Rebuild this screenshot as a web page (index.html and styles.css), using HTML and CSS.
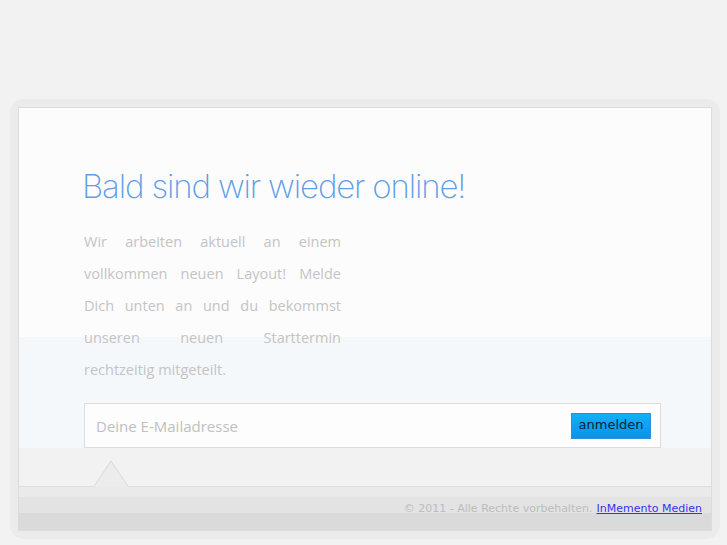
FILE: index.html
```html
<!DOCTYPE html>
<html lang="de">
<head>
<meta charset="utf-8">
<title>Bald sind wir wieder online!</title>
<link rel="stylesheet" href="styles.css">
</head>
<body>
<div class="frame">
  <div class="panel">
    <div class="content">
      <h1 class="title">Bald sind wir wieder online!</h1>
      <p class="intro">Wir arbeiten aktuell an einem vollkommen neuen Layout! Melde Dich unten an und du bekommst unseren neuen Starttermin rechtzeitig mitgeteilt.</p>
      <form class="signup">
        <input class="email" type="text" placeholder="Deine E-Mailadresse">
        <button class="submit" type="button">anmelden</button>
      </form>
    </div>
    <div class="shelf">
      <span class="notch"></span>
    </div>
    <div class="footer">
      <span class="copy">© 2011 - Alle Rechte vorbehalten.</span>
      <a class="link" href="#">InMemento Medien</a>
    </div>
  </div>
</div>
</body>
</html>
```

FILE: styles.css
```css
html, body {
  margin: 0;
  padding: 0;
  background: #f2f2f2;
}

body {
  padding-top: 99px;
  font-family: "Open Sans", "DejaVu Sans", sans-serif;
}

.frame {
  margin-left: 10px;
  width: 694px;
  padding: 8px;
  background: #ebebeb;
  border-radius: 14px;
}

.panel {
  border: 1px solid #dcdcdc;
  background: #fcfcfc;
}

.content {
  height: 340px;
  padding: 0 50px 0 65px;
  box-sizing: border-box;
  background: linear-gradient(to bottom, #fcfcfc 0, #fcfcfc 229px, #f5f8fb 229px, #f5f8fb 100%);
  display: flex;
  flex-direction: column;
}

.title {
  margin: 56px 0 0 -2px;
  font-family: "Inter", sans-serif;
  font-weight: 200;
  font-size: 33px;
  line-height: 44px;
  letter-spacing: -1.15px;
  color: #5f9ee8;
}

.intro {
  margin: 18px 0 0 0;
  width: 257px;
  font-size: 14.5px;
  line-height: 32px;
  font-weight: 400;
  color: #c4c4c4;
  text-align: justify;
}

.signup {
  margin: 17px 0 0 0;
  height: 46px;
  box-sizing: border-box;
  border: 1px solid #dcdcdc;
  background: #fdfdfd;
  display: flex;
  align-items: center;
  padding: 0 8px 0 11px;
}

.email {
  flex: 1;
  border: 0;
  outline: 0;
  background: transparent;
  font-family: "Open Sans", sans-serif;
  font-size: 15px;
  color: #999;
  padding: 0;
}

.email::placeholder {
  color: #c0c0c0;
}

.submit {
  width: 80px;
  height: 26px;
  margin-right: 1px;
  border: 1px solid #2e8fd6;
  background: linear-gradient(to bottom, #12b0f8, #0a92ea);
  font-family: "DejaVu Sans", sans-serif;
  font-size: 13px;
  color: #0c2336;
  padding: 0 0 2px 0;
}

.shelf {
  height: 38px;
  background: #f2f2f2;
  border-bottom: 1px solid #dedede;
  position: relative;
}

.notch {
  position: absolute;
  left: 74px;
  bottom: -1px;
  width: 0;
  height: 0;
  border-left: 18px solid transparent;
  border-right: 18px solid transparent;
  border-bottom: 27px solid #dcdcdc;
}

.notch::after {
  content: "";
  position: absolute;
  left: -17px;
  top: 1.5px;
  width: 0;
  height: 0;
  border-left: 17px solid transparent;
  border-right: 17px solid transparent;
  border-bottom: 25.5px solid #ececec;
}

.footer {
  height: 43px;
  background: linear-gradient(to bottom, #eaeaea 0, #eaeaea 10px, #e3e3e3 10px, #e3e3e3 26px, #dadada 26px, #dadada 100%);
  display: flex;
  justify-content: flex-end;
  align-items: flex-start;
  padding: 15px 9px 0 0;
  box-sizing: border-box;
  font-family: "DejaVu Sans", sans-serif;
  font-size: 11px;
  gap: 4px;
}

.copy {
  color: #bdbdbd;
}

.link {
  color: #3333ee;
  text-decoration: underline;
}
```
